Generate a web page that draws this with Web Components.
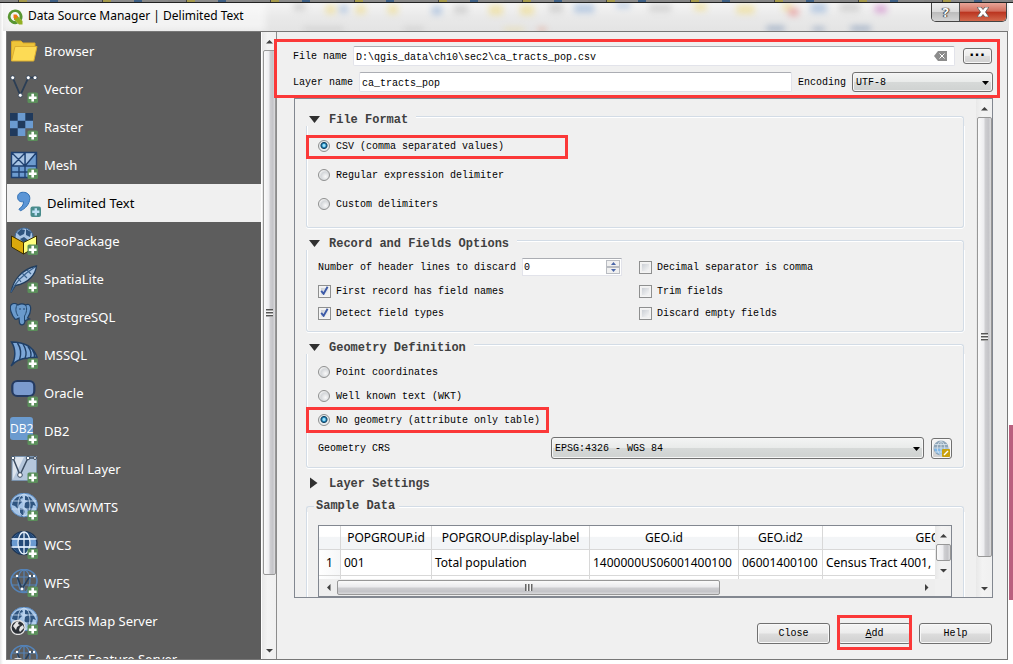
<!DOCTYPE html>
<html lang="en">
<head>
<meta charset="utf-8">
<title>Data Source Manager | Delimited Text</title>
<style>
  html, body { height: 100%; }
  body {
    margin: 0; overflow: hidden; color: #000;
    --ui: "Noto Sans", "Open Sans", sans-serif;
    --mono: "Liberation Mono", monospace;
    font: 10px/14px var(--mono);
  }
</style>
</head>
<body>
<source-manager></source-manager>

<script>
const badge = (fill = '#5b8f5b', plus = '#fff') =>
  `<rect x="17.5" y="17.5" width="10.500" height="10.500" rx="1.6" fill="${fill}"/><path d="M22.700 18.800v7.800M18.800 22.700h7.800" stroke="${plus}" stroke-width="2.6"/>`;
const land = '<path d="M3 8l4-4 5-1 1 2-3 1 2 3-3 3-1 4-3-3-3-1zM15 3l5 1 4 5 2 4-3-1-1 4-3 4-2-4-3-2 1-4 3-2-3-1zM10 15l4 1 1 3-3 5-2-4z" fill="#2f5580"/>';
const grid = (c, w = 1) => `<g fill="none" stroke="${c}" stroke-width="${w}"><ellipse cx="14" cy="12" rx="6" ry="11"/><path d="M14 1v22M1.5 8h25M1.5 16h25"/></g>`;
const vnet = '<path d="M7 7l5 13L20 7h4" fill="none" stroke="#26405e" stroke-width="1.6"/><g fill="#fff"><circle cx="7" cy="7" r="1.2"/><circle cx="12" cy="20" r="1.4"/><circle cx="20" cy="7" r="1.2"/><circle cx="24" cy="7" r="1.2"/></g>';
const ICONS = {
  folder: '<path d="M1.5 24V4.500l1.500-.500h8l2 2h12v5" fill="#eec53a" stroke="#d9a92a"/><path d="M1.500 24L5 9.500h22L23.800 24z" fill="#fddb55" stroke="#dcae30"/>',
  vector: '<path d="M2.700 2.700L10.300 20.300 18.300 2.700H25" fill="none" stroke="#2b3e55" stroke-width="1.800"/><g fill="#fff" stroke="#2b3e55" stroke-width=".8"><circle cx="2.700" cy="2.700" r="2"/><circle cx="10.300" cy="20.300" r="2"/><circle cx="18.300" cy="2.700" r="2"/><circle cx="25" cy="2.700" r="2"/></g>' + badge(),
  raster: '<g fill="#6b9bd0"><path d="M0 0h23v15.300H15.300V23H0z"/></g><path d="M0 0h7.700v7.700H0zM15.300 0H23v7.700h-7.700zM7.700 7.700h7.600v7.600H7.700zM0 15.300h7.700V23H0z" fill="#203a5c"/>' + badge(),
  mesh: '<rect x="1.500" y="1.500" width="25" height="25" fill="#6c9bd0"/><path d="M2 2h13v13H2zM16 2h10L16 14z" fill="#a8c4e4"/><path d="M1.500 1.500h25v13.500h-25zM15 1.500v13.500M2 2l13 13M15 2L2 15M26 2L15 15M1.500 15v11.500H18M9 16v10M2 21h24M15 15v11M26.500 15v4" fill="none" stroke="#1f4070" stroke-width="1.400"/>' + badge(),
  comma: '<path d="M10.500 3.300C6.500 3 4.300 5.600 4.600 8.700c.3 3 2.700 4.600 5.900 3.900.3 3.300-2 5.800-4.600 7.600l1.500 1.600c5.200-2.300 9.100-6.800 9.400-12.200.2-3.700-2.400-6.200-6.300-6.300z" fill="#5b95d6" stroke="#2f6fb4" stroke-width="1"/><rect x="17.500" y="17.500" width="10.500" height="10.500" rx="2" fill="#4a8c8c"/><path d="M22.800 19.200v7.200M19.200 22.800h7.200" stroke="#bfe0f5" stroke-width="2.400"/>',
  geopackage: '<circle cx="14" cy="10" r="9" fill="#a9c4e3" stroke="#3d6a9c"/><path d="M7 6l4-4 4 1-1 4-4 2zM16 2l5 3-1 5-4-2zM10 12l4-2 4 3-3 4z" fill="#2f5580"/><path d="M1.500 9l12 6.500v11.500L1.500 20z" fill="#dba90c" stroke="#3b3000"/><path d="M13.500 15.500L26.500 9v10.500l-13 7.500z" fill="#ffff80" stroke="#3b3000"/>' + badge(),
  feather: '<path d="M1 27.500c2-12 10-23 25.500-26.500-1 8-7 17-21 19.500z" fill="#a9c5e5" stroke="#203c5c" stroke-width="1.300"/><path d="M1 27c4-10 13-18 24-25M8 13l3 4M12 8l5 5M17 5l4 4" fill="none" stroke="#3b638f" stroke-width="1.200"/>' + badge(),
  elephant: '<path d="M1 2c2-2 5-1.500 7 0 3-1.700 6-1 7.500 0 2-1 4.500-1 5 2 .5 3-1 8-3 11l2 1-3 1c-1 1-2 .6-2 3-.5 2-4 3-5 0L9 15c-2 1-3 2-4 1C2 13-1 5 1 2z" fill="#6a9acc" stroke="#1f3f63" stroke-width="1.200"/><path d="M7 2C5 6 6 10 8 13M15.500 2c2 3 1 8-1 11v5M9 6h2M13 6h2" fill="none" stroke="#24496f"/>' + badge(),
  mssql: '<path d="M1.500 1c9 0 21 2.500 25.500 15l-9 1C11 17.500 5 20 1 25 6 18 6 8 1.500 1z" fill="#7da7d8" stroke="#203f66" stroke-width="1.500"/><path d="M7.500 2c4 6 4 11 2 17M13 3c3 5 4 10 2 14.500M18 5.500c3 4 3.500 8 2.500 11M22.500 9c2 3 2.500 5 2 7.500" fill="none" stroke="#203f66" stroke-width="1.400"/>' + badge(),
  oracle: '<rect x="2.300" y="2" width="22" height="15" rx="5" fill="#7b9bcf" stroke="#253b62" stroke-width="2.200"/>' + badge(),
  db2: '<rect x="0" y="0" width="23" height="23" rx="3" fill="#6b9bcf"/><text x="0" y="16" font-family="Open Sans, sans-serif" font-size="12" fill="#fff">DB2</text>' + badge(),
  virtual: '<rect x="2" y="1.500" width="24.500" height="24" fill="#b5c7dc" stroke="#7a93ae"/><path d="M2.500 25L14 2h-11z" fill="#dde5ee"/><path d="M3 3l7 17L18 3h7" fill="none" stroke="#3b4d62" stroke-width="1.500"/><g fill="#fff" stroke="#3b4d62"><circle cx="3" cy="3" r="1.800"/><circle cx="10" cy="20" r="2.300"/><circle cx="18" cy="3" r="1.800"/><circle cx="25" cy="3" r="1.500"/></g>' + badge(),
  wms: '<ellipse cx="14" cy="12" rx="13.500" ry="11.800" fill="#a5c4e6" stroke="#5b8cc4"/>' + land + grid('#c9ddf2', .8) + badge(),
  wcs: '<ellipse cx="14" cy="12" rx="13" ry="11.500" fill="#6a9ad0" stroke="#1e3656" stroke-width="1.500"/><path d="M3 7h22l-5-5H8zM8 9h12v6H8zM3 17h22l-5 5H8z" fill="#244a78"/>' + grid('#e6f0fa', 1.300) + badge(),
  wfs: '<ellipse cx="14" cy="12" rx="13" ry="11.500" fill="none" stroke="#5483b8" stroke-width="1.600"/>' + grid('#5483b8', 1.200) + vnet + badge(),
  arcmap: '<ellipse cx="14" cy="12" rx="13.500" ry="11.800" fill="#a5c4e6" stroke="#5b8cc4"/>' + land + grid('#c9ddf2', .8) + '<circle cx="8" cy="20.500" r="7" fill="#2c3036" stroke="#e4e4e4" stroke-width="1.300"/><path d="M3 19l3-4 3-1-1 3 2 1-3 2-1 3zM10 20l3-2 1 3-4 4-1-2z" fill="#e4e4e4"/>' + badge(),
  arcfeature: '<ellipse cx="14" cy="12" rx="13" ry="11.500" fill="none" stroke="#5483b8" stroke-width="1.600"/>' + grid('#5483b8', 1.200) + vnet + '<circle cx="8" cy="20.500" r="7" fill="#2c3036" stroke="#e4e4e4" stroke-width="1.300"/>' + badge()
};

function define(name, css, html, setup) {
  const tpl = document.createElement('template');
  tpl.innerHTML = `<style>*{box-sizing:border-box}${css}</style>${html}`;
  customElements.define(name, class extends HTMLElement {
    connectedCallback() {
      if (this.shadowRoot) return;
      this.attachShadow({ mode: 'open' }).append(tpl.content.cloneNode(true));
      if (setup) setup(this, this.shadowRoot);
    }
  });
}

/* Red rectangle that frames its parent. */
define('callout-frame', `
  :host { position: absolute; inset: var(--inset, 0); box-sizing: border-box; border: 3px solid #fb3838; pointer-events: none; z-index: 5; }`, '');

/* Aero scroll bar; --thumb and --rest share out the track. */
define('scroll-bar', `
  :host { display: flex; flex-direction: column; flex: none; width: 16px; background: linear-gradient(90deg, #e8e8e8, #f3f3f3 40%, #f0f0f0); }
  :host([horizontal]) { flex-direction: row; width: auto; height: 17px; background: #eee; }
  .end { flex: none; width: 100%; height: 18px; display: grid; place-items: center; }
  :host([horizontal]) .end { width: 18px; height: 100%; }
  .thumb { flex: var(--thumb, 9) 0 0; margin-left: 1px; display: grid; place-items: center; border: 1px solid #979797; border-radius: 2px;
    background: linear-gradient(90deg, #fafafa, #ededf0 45%, #cfcfd2 55%, #c4c4c8 80%, #dcdcde); }
  :host([horizontal]) .thumb { margin: 1px 0; background: linear-gradient(#fafafa, #eaeaec 45%, #cdcdd0 55%, #c4c4c8 80%, #d8d8da); }
  .rest { flex: var(--rest, 1) 0 0; }
  .grip { width: 7px; height: 8px; background: repeating-linear-gradient(#555 0 1px, #aaa 1px 2px, #f4f4f4 2px 3px); }
  :host([horizontal]) .grip { width: 8px; height: 7px; background: repeating-linear-gradient(90deg, #666 0 1px, #aaa 1px 2px, #f4f4f4 2px 3px); }
  :host([small]) .grip { display: none; }
  svg { width: 7px; height: 7px; fill: #404040; }
  :host([horizontal]) svg { transform: rotate(-90deg); }`,
  `<div class="end"><svg viewBox="0 0 7 7"><path d="M0 5.500L3.500 2 7 5.500z"/></svg></div>
   <div class="thumb"><div class="grip"></div></div><div class="rest"></div>
   <div class="end"><svg viewBox="0 0 7 7"><path d="M0 2l3.500 3.500L7 2z"/></svg></div>`);

define('source-item', `
  :host { display: block; }
  a { display: flex; align-items: center; gap: 6px; height: 38px; padding-left: 3px; color: #fff; text-decoration: none; font: 13px/18px var(--ui); white-space: nowrap; }
  :host([selected]) a { padding-left: 6px; background: #f0f0f0; color: #000; }
  svg { flex: none; width: 28px; height: 28px; }`,
  `<a href="#"><svg viewBox="0 0 28 28" aria-hidden="true"></svg><slot></slot></a>`,
  (el, root) => { root.querySelector('svg').innerHTML = ICONS[el.getAttribute('icon')]; });

define('option-group', `
  :host { display: block; color: #404040; }
  header { display: flex; height: 14px; font: bold 12px/16px var(--mono); }
  svg { flex: none; width: 11px; height: 14px; margin: 0 9px 0 3px; fill: #303030; }
  .closed { display: none; }
  :host([closed]) .open { display: none; }
  :host([closed]) .closed { display: block; }
  .stub { display: none; width: 8px; margin: 8px 2px 0 0; border: solid #d3dce6; border-width: 1px 0 0 1px; border-top-left-radius: 3px; }
  .rule { flex: 1; margin: 4px 0 0 8px; border: solid #d3dce6; border-width: 1px 1px 0 0; border-top-right-radius: 3px; box-shadow: inset 0 1px #fff; }
  section { padding: var(--pad, 12px 11px); color: #000; border: solid #d3dce6; border-width: 0 1px 1px; border-radius: 0 0 3px 3px; box-shadow: inset 1px 0 #fff, 0 1px #fff, 1px 0 #fff; }
  :host([closed]) .rule, :host([closed]) section, :host([plain]) header svg { display: none; }
  :host([plain]) .stub { display: block; }
  :host([plain]) .rule { margin-top: 8px; margin-left: 4px; }`,
  `<header><svg class="open" viewBox="0 0 11 14"><path d="M0 4h11L5.500 11z"/></svg><svg class="closed" viewBox="0 0 11 14"><path d="M1 1.500L8.500 7 1 12.500z"/></svg>
    <span class="stub"></span><span class="title"></span><span class="rule"></span></header><section><slot></slot></section>`,
  (el, root) => { root.querySelector('.title').textContent = el.getAttribute('heading'); });

/* Radio button or tick box with its label. */
define('choice-box', `
  :host { display: block; position: relative; }
  label { display: flex; align-items: center; gap: 6px; width: max-content; height: 14px; }
  span { padding-top: 2px; }
  input { appearance: none; flex: none; width: 12px; height: 12px; margin: 0; }
  input[type=radio] { border: 1px solid #8e8f8f; border-radius: 50%; background: radial-gradient(circle at 65% 65%, #f8f8f8, #d4d7da 50%, #f4f4f4 75%); }
  input[type=radio]:checked { background: radial-gradient(circle at 50% 45%, #9fe3fb 0 1px, #2187bd 2px, #11405f 3px 3px, #e8ecee 4px); }
  input[type=checkbox] { width: 13px; height: 13px; margin-right: -1px; border: 1px solid #8e8f8f; background: linear-gradient(135deg, #cbcfd5, #f6f6f6) content-box; padding: 2px; box-shadow: inset 0 0 0 1px #f4f4f4; }
  svg { display: none; position: absolute; left: 2px; top: 2px; }
  :host([type=checkbox][checked]) input:checked + svg { display: block; }`,
  `<label><input><svg width="9" height="9" viewBox="0 0 9 9" aria-hidden="true"><path d="M1.200 4.800L3.600 7.800 7.600.8" fill="none" stroke="#3c5aa8" stroke-width="1.900"/></svg><span><slot></slot></span></label><slot name="frame"></slot>`,
  (el, root) => {
    const i = root.querySelector('input');
    i.type = el.getAttribute('type');
    i.checked = el.hasAttribute('checked');
  });

define('text-field', `
  :host { display: flex; align-items: center; gap: 6px; flex: 1; min-width: 0; position: relative; }
  label { padding-top: 2px; }
  input { flex: 1; min-width: 0; height: 20px; padding: 2px 2px 0; border: 1px solid #e2e3ea; border-top-color: #abadb3; border-radius: 2px; background: #fff; font: 10px/14px var(--mono); color: #000; outline: 0; }
  button { position: absolute; right: 8px; width: 13px; height: 10px; padding: 0; border: 0; background: none; display: grid; }
  :host(:not([clearable])) button { display: none; }`,
  `<label for="f"></label><input id="f" type="text"><button type="button" aria-label="Clear"><svg width="13" height="10" viewBox="0 0 13 10"><path d="M0 5l4-5h9v10H4z" fill="#8c8c8c"/><path d="M5.500 2.500l5 5m0-5l-5 5" stroke="#fff"/></svg></button>`,
  (el, root) => {
    root.querySelector('label').textContent = el.getAttribute('label');
    root.querySelector('input').value = el.getAttribute('value');
  });

define('drop-down', `
  :host { display: flex; align-items: center; }
  label { flex: none; width: var(--label-width, auto); margin-right: 6px; padding-top: 2px; }
  div { position: relative; flex: 1; display: flex; }
  select { appearance: none; width: 100%; height: var(--h, 20px); padding: 1px 18px 0 3px; border: 1px solid #707070; border-radius: 3px; color: #000;
    background: linear-gradient(#f3f4f4, #e9ebea 48%, #d6d9d8 52%, #cfd2d1); box-shadow: inset 0 0 0 1px #f6f6f6; font: 10px/14px var(--mono); }
  svg { position: absolute; right: 4px; top: 50%; margin-top: -1px; pointer-events: none; }`,
  `<label for="s"></label><div><select id="s"><option></option></select><svg width="7" height="4" viewBox="0 0 7 4"><path d="M0 0h7L3.500 4z"/></svg></div>`,
  (el, root) => {
    root.querySelector('label').textContent = el.getAttribute('label');
    root.querySelector('option').textContent = el.getAttribute('value');
  });

define('spin-field', `
  :host { display: flex; align-items: center; gap: 6px; }
  label { padding-top: 2px; }
  div { display: flex; width: 100px; height: 18px; padding: 1px; border: 1px solid #e2e3ea; border-top-color: #abadb3; background: #fff; }
  input { appearance: textfield; flex: 1; min-width: 0; padding: 1px 0 0; border: 0; font: 10px/14px var(--mono); outline: 0; }
  input::-webkit-inner-spin-button { appearance: none; }
  span { display: grid; width: 14px; }
  button { padding: 0; border: 1px solid #b9bcc2; background: #f0f0f0; display: grid; place-items: center; min-height: 0; }`,
  `<label for="n">Number of header lines to discard</label><div><input id="n" type="number" value="0"><span>
   <button type="button" aria-label="Increase"><svg width="5" height="3" viewBox="0 0 5 3"><path d="M0 3h5L2.500 0z" fill="#4a66a8"/></svg></button>
   <button type="button" aria-label="Decrease"><svg width="5" height="3" viewBox="0 0 5 3"><path d="M0 0h5L2.500 3z" fill="#4a66a8"/></svg></button></span></div>`);

define('push-button', `
  :host { display: block; position: relative; width: 73px; height: 21px; }
  button { display: grid; place-items: center; width: 100%; height: 100%; padding: 1px 0 0; border: 1px solid #707070; border-radius: 3px; color: #000;
    background: linear-gradient(#f4f4f4, #ececec 48%, #dcdcdc 52%, #d0d0d0); box-shadow: inset 0 0 0 1px #f8f8f8; font: 10px/14px var(--mono); }`,
  `<button type="button"><span><slot></slot></span></button><slot name="frame"></slot>`);

define('sample-table', `
  :host { display: flex; flex-direction: column; box-sizing: border-box; height: 72px; border: 1px solid #828790; background: #fff; }
  .top { display: flex; height: 53px; min-height: 0; }
  .view { flex: 1; min-width: 0; overflow: hidden; }
  table { width: 788px; table-layout: fixed; border-collapse: separate; border-spacing: 0; font: 12px/18px var(--ui); }
  th, td { height: 26px; padding: 0 3px; border: solid #d8d8d8; border-width: 0 1px 1px 0; white-space: nowrap; text-align: left; font-weight: 400; }
  thead th { height: 24px; text-align: center; background: linear-gradient(#fff 45%, #f3f5f7 50%, #f3f5f7); }
  tbody th { text-align: center; background: linear-gradient(90deg, #fff, #f6f7f8); }
  .bottom { display: flex; background: #f0f0f0; }
  .bottom scroll-bar { flex: 1; }
  .corner { width: 16px; }`,
  `<div class="top"><div class="view"><table>
     <colgroup><col style="width:22px"><col style="width:91px"><col style="width:158px"><col style="width:149px"><col style="width:84px"><col></colgroup>
     <thead><tr><th></th><th>POPGROUP.id</th><th>POPGROUP.display-label</th><th>GEO.id</th><th>GEO.id2</th><th>GEO.display-label</th></tr></thead>
     <tbody><tr><th>1</th><td>001</td><td>Total population</td><td>1400000US06001400100</td><td>06001400100</td><td>Census Tract 4001,</td></tr>
     <tr><th></th><td></td><td></td><td></td><td></td><td></td></tr></tbody></table></div>
     <scroll-bar small style="--rest:0"></scroll-bar></div>
   <div class="bottom"><scroll-bar horizontal style="--thumb:384;--rest:198"></scroll-bar><div class="corner"></div></div>`);

define('source-list', `
  :host { display: flex; width: 269px; flex: none; }
  nav { flex: 1; min-width: 0; overflow: auto; scrollbar-width: none; background: #5d5d5d; border-right: 1px solid #fff; }
  scroll-bar { width: 14px; }`,
  `<nav><slot></slot></nav><scroll-bar style="--thumb:525;--rest:66"></scroll-bar>`);

define('delimited-form', `
  :host { flex: 1; min-width: 0; display: flex; flex-direction: column; padding: 14px 14px 15px 16px; background: #f0f0f0; border-left: 1px solid #8c8c8c; }
  .file { position: relative; display: grid; gap: 6px; margin-bottom: 6px; --inset: -7px -7px -6px -19px; }
  .line { display: flex; align-items: center; gap: 6px; }
  .line push-button { width: 29px; height: 16px; margin: 0 1px 0 2px; }
  .dots { font: bold 16px/10px "Liberation Sans", sans-serif; }
  .line drop-down { width: 195px; }
  .area { flex: 1; min-height: 0; display: flex; border: 1px solid #828790; margin: 0 0 25px 1px; }
  .content { flex: 1; min-width: 0; overflow: auto; scrollbar-width: none; padding: 13px 12px 8px 11px; display: flex; flex-direction: column; gap: 8px; }
  .content > * { flex: none; }
  .radios { display: grid; }
  .loose { gap: 15px; }
  .tight { gap: 10px; }
  .pairs { display: grid; grid-template-columns: 1fr 1fr; gap: 8px; align-items: center; }
  .crs { display: flex; align-items: center; gap: 7px; --h: 22px; --label-width: 227px; }
  .crs drop-down { flex: 1; }
  .crs push-button { width: 21px; }
  .crs svg { display: block; }
  .actions { display: flex; justify-content: flex-end; gap: 8px; padding-right: 1px; }`,
  `<div class="file">
     <div class="line"><text-field clearable label="File name" value="D:\\qgis_data\\ch10\\sec2\\ca_tracts_pop.csv"></text-field><push-button><span class="dots">···</span></push-button></div>
     <div class="line"><text-field label="Layer name" value="ca_tracts_pop"></text-field><drop-down label="Encoding" value="UTF-8"></drop-down></div>
     <callout-frame></callout-frame>
   </div>
   <div class="area"><div class="content">
     <option-group heading="File Format" style="--pad:13px 11px 16px"><div class="radios loose">
       <choice-box type="radio" checked>CSV (comma separated values)<callout-frame slot="frame" style="--inset:-4px auto -6px -12px;width:262px"></callout-frame></choice-box>
       <choice-box type="radio">Regular expression delimiter</choice-box>
       <choice-box type="radio">Custom delimiters</choice-box></div></option-group>
     <option-group heading="Record and Fields Options" style="--pad:8px 11px 11px"><div class="pairs">
       <spin-field></spin-field><choice-box type="checkbox">Decimal separator is comma</choice-box>
       <choice-box type="checkbox" checked>First record has field names</choice-box><choice-box type="checkbox">Trim fields</choice-box>
       <choice-box type="checkbox" checked>Detect field types</choice-box><choice-box type="checkbox">Discard empty fields</choice-box></div></option-group>
     <option-group heading="Geometry Definition" style="--pad:11px 11px 8px"><div class="radios tight">
       <choice-box type="radio">Point coordinates</choice-box>
       <choice-box type="radio">Well known text (WKT)</choice-box>
       <choice-box type="radio" checked>No geometry (attribute only table)<callout-frame slot="frame" style="--inset:-6px auto -6px -12px;width:243px"></callout-frame></choice-box>
       <div class="crs"><drop-down label="Geometry CRS" value="EPSG:4326 - WGS 84"></drop-down><push-button><svg width="17" height="17" viewBox="0 0 17 17"><circle cx="8" cy="8" r="7.500" fill="#8fa5b8"/><path d="M1 8.500h14.500a7.500 7.500 0 0 1-14.500 0z" fill="#7db6e8"/><path d="M.5 8h15M2 4.500h12M2 12h12M8 .5v15M8 .5c-5 4-5 11 0 15M8 .5c5 4 5 11 0 15" fill="none" stroke="#dbe6ee" stroke-width=".8"/><rect x="9" y="9" width="8" height="8" rx="1" fill="#c9a20e"/><path d="M11 15l4-4" stroke="#fff" stroke-width="1.500"/></svg></push-button></div></div></option-group>
     <option-group closed heading="Layer Settings"></option-group>
     <option-group plain heading="Sample Data" style="--pad:13px 11px"><sample-table></sample-table></option-group>
   </div><scroll-bar style="--thumb:440;--rest:22"></scroll-bar></div>
   <div class="actions"><push-button>Close</push-button><push-button><u>A</u>dd<callout-frame slot="frame" style="--inset:-8px -1px -6px -1px"></callout-frame></push-button><push-button>Help</push-button></div>`);

define('title-bar', `
  :host { display: flex; height: 28px; position: relative; overflow: hidden; background: linear-gradient(#f4f4f4, #e9e9e9 50%, #e4e4e4); }
  .ghost { position: absolute; inset: 0; width: 100%; height: 100%; filter: blur(3px); opacity: .5; }
  .logo { position: relative; flex: none; width: 16px; height: 16px; margin: 6px 5px 0 4px; }
  h1 { position: relative; flex: 1; margin: 0; font: 12px/26px var(--ui); }
  .caps { position: relative; display: flex; height: 19px; margin-right: 2px; border: 1px solid #444; border-top: 0; border-radius: 0 0 5px 5px; overflow: hidden; }
  button { display: grid; place-items: center; height: 100%; padding: 0; border: 0; }
  .help { width: 28px; background: linear-gradient(#eee, #dcdcdc 48%, #bcbcbc 52%, #d4d4d4); border-right: 1px solid #555; font: bold 13px/16px var(--ui); color: #fff; text-shadow: 0 0 1px #333, 1px 0 1px #333, -1px 0 1px #333; }
  .close { width: 46px; background: linear-gradient(#e8a598, #d2705f 45%, #bb3520 52%, #d2684c); }`,
  `<svg class="ghost" viewBox="0 0 1004 28" preserveAspectRatio="none" aria-hidden="true"><rect x="0" y="0" width="262" height="28" fill="#fff"/>
   <g fill="#bbb"><rect x="290" y="0" width="12" height="8"/><rect x="450" y="2" width="14" height="9"/><rect x="545" y="0" width="14" height="10"/><rect x="645" y="1" width="22" height="8"/><rect x="835" y="0" width="20" height="9"/><rect x="300" y="24" width="40" height="5"/><rect x="400" y="24" width="20" height="5"/></g>
   <g fill="#f0d873"><rect x="322" y="2" width="10" height="9"/><rect x="352" y="2" width="10" height="9"/><rect x="384" y="2" width="10" height="9"/><rect x="485" y="2" width="14" height="10"/><rect x="516" y="2" width="14" height="10"/><rect x="500" y="25" width="20" height="4"/><rect x="690" y="0" width="12" height="8"/><rect x="732" y="2" width="18" height="9"/><rect x="778" y="0" width="10" height="8"/></g>
   <g fill="#86a9d6"><rect x="336" y="2" width="8" height="8"/><rect x="428" y="3" width="10" height="9"/><rect x="570" y="1" width="20" height="9"/><rect x="612" y="0" width="14" height="5"/><rect x="806" y="0" width="16" height="10"/></g>
   <rect x="784" y="5" width="10" height="8" fill="#e57373"/><rect x="870" y="2" width="12" height="8" fill="#c76bc0"/>
   <g fill="#5f7da8"><rect x="762" y="23" width="18" height="6"/><rect x="808" y="24" width="12" height="5"/><rect x="846" y="23" width="20" height="6"/></g><rect x="534" y="25" width="8" height="4" fill="#d64"/></svg>
   <svg class="logo" viewBox="0 0 16 16"><path d="M8 .5a7.300 7.300 0 1 0 3 14l-2.500-2.500A4.500 4.500 0 1 1 12.300 9l2.400 2.200A7.300 7.300 0 0 0 8 .5z" fill="#589632"/><path d="M7 7h3.500l5 5v3.500H12l-5-5z" fill="#93b023"/><path d="M6.500 5.500h3l1.500 2-2 2.500-2.500-1z" fill="#ee7913"/></svg>
   <h1>Data Source Manager | Delimited Text</h1>
   <div class="caps"><button class="help" type="button">?</button><button class="close" type="button" aria-label="Close window"><svg width="12" height="10" viewBox="0 0 12 10"><path d="M0 0h4l2 2.500L8 0h4L8.500 5l3.500 5H8L6 7.500 4 10H0l3.500-5z" fill="#fff" stroke="#555" stroke-width=".8"/></svg></button></div>`);

define('source-manager', `
  :host { display: flex; flex-direction: column; height: 100vh; background: linear-gradient(90deg, transparent calc(100% - 4px), #b9607f 0) 0 425px / 100% 175px no-repeat, linear-gradient(90deg, #e6e6e6, #fff 3px, #fff); }
  .desk { flex: none; height: 3px; border-bottom: 1px solid #222; background: repeating-linear-gradient(90deg, #858585 0 18px, #444 18px 19px, #a59a4c 19px 27px, #8b8b8b 27px 50px, #3e5f84 50px 58px, #888 58px 84px); }
  .window { flex: 1; min-height: 0; display: flex; flex-direction: column; margin: 0 4px 0 3px; }
  .body { flex: 1; min-height: 0; display: flex; margin: 0 1px 4px 3px; border: 1px solid #777; }`,
  `<div class="desk"></div><div class="window"><title-bar></title-bar><div class="body">
   <source-list>
     <source-item icon="folder">Browser</source-item><source-item icon="vector">Vector</source-item><source-item icon="raster">Raster</source-item>
     <source-item icon="mesh">Mesh</source-item><source-item icon="comma" selected>Delimited Text</source-item><source-item icon="geopackage">GeoPackage</source-item>
     <source-item icon="feather">SpatiaLite</source-item><source-item icon="elephant">PostgreSQL</source-item><source-item icon="mssql">MSSQL</source-item>
     <source-item icon="oracle">Oracle</source-item><source-item icon="db2">DB2</source-item><source-item icon="virtual">Virtual Layer</source-item>
     <source-item icon="wms">WMS/WMTS</source-item><source-item icon="wcs">WCS</source-item><source-item icon="wfs">WFS</source-item>
     <source-item icon="arcmap">ArcGIS Map Server</source-item><source-item icon="arcfeature">ArcGIS Feature Server</source-item>
   </source-list><delimited-form></delimited-form></div></div>`);
</script>
</body>
</html>
